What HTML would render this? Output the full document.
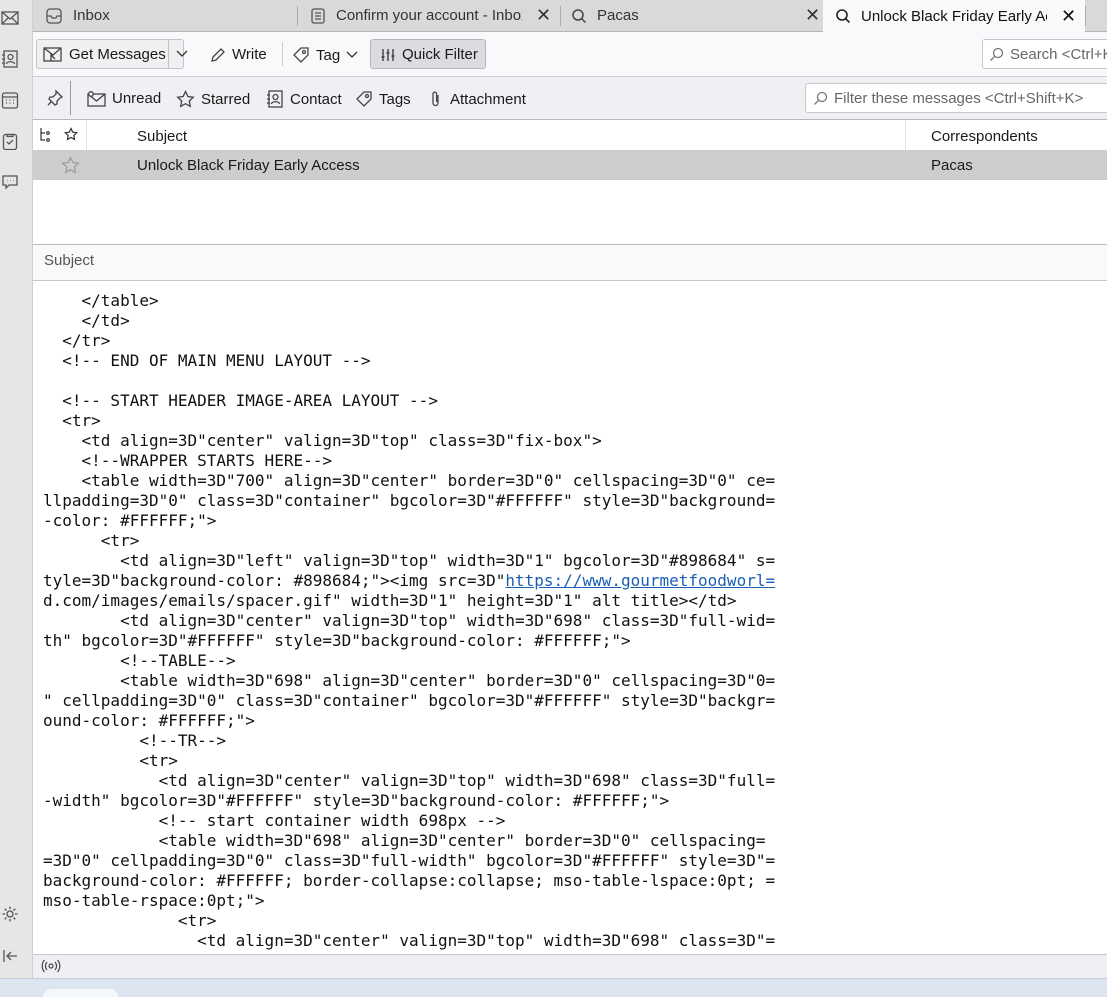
<!DOCTYPE html>
<html><head><meta charset="utf-8"><style>
*{margin:0;padding:0;box-sizing:border-box}
body{width:1107px;height:997px;overflow:hidden;background:#fff;font-family:"Liberation Sans",sans-serif;font-size:15px;color:#1a1a1a;position:relative}
.a{position:absolute}
.side{left:0;top:0;width:33px;height:978px;background:#e6e6e6;border-right:1px solid #cfcfcf}
.tabs{left:33px;top:0;width:1074px;height:32px;background:#d9d9d9;border-bottom:1px solid #b5b5b5}
.tab{top:0;height:31px;display:flex;align-items:center;font-size:15px;color:#333;white-space:nowrap}
.tb{left:33px;top:32px;width:1074px;height:45px;background:#f9f9fb;border-bottom:1px solid #cfcfd8}
.qf{left:33px;top:77px;width:1074px;height:43px;background:#f0f0f4;border-bottom:1px solid #b8b8b8}
.btn{display:flex;align-items:center;gap:6px;font-size:15px;color:#1a1a1a;white-space:nowrap}
.mono{font-family:"DejaVu Sans Mono","Liberation Mono",monospace;font-size:16px;line-height:20px;white-space:pre;color:#111}
svg{display:block;flex:none}
</style></head><body>
<div class="a side"></div>
<svg class="a" style="left:1px;top:9px" width="18" height="18" viewBox="0 0 18 18" fill="none" stroke="#555" stroke-width="1.3"><rect x="1" y="3" width="16" height="12"/><path d="M1 3l8 7 8-7M1 15l6-6M17 15l-6-6"/></svg>
<svg class="a" style="left:1px;top:50px" width="18" height="18" viewBox="0 0 18 18" fill="none" stroke="#555" stroke-width="1.3"><rect x="3" y="1" width="13" height="16"/><circle cx="9.5" cy="7" r="2.5"/><path d="M5.5 14c0-3 8-3 8 0M1 5h3M1 9h3M1 13h3"/></svg>
<svg class="a" style="left:1px;top:91px" width="18" height="18" viewBox="0 0 18 18" fill="none" stroke="#555" stroke-width="1.3"><rect x="1.5" y="2" width="15" height="15" rx="2"/><path d="M1.5 6h15M5 9h1M8.5 9h1M12 9h1M5 12h1M8.5 12h1M12 12h1"/></svg>
<svg class="a" style="left:1px;top:132px" width="18" height="18" viewBox="0 0 18 18" fill="none" stroke="#555" stroke-width="1.3"><rect x="2.5" y="2.5" width="13" height="15" rx="2"/><path d="M6 2.5h6v2H6zM6 10l2 2 4-4"/></svg>
<svg class="a" style="left:1px;top:173px" width="18" height="18" viewBox="0 0 18 18" fill="none" stroke="#555" stroke-width="1.3"><path d="M2 3h14v9H8l-3 3v-3H2z"/><path d="M6 7.5h.5M9 7.5h.5M12 7.5h.5"/></svg>
<svg class="a" style="left:1px;top:905px" width="18" height="18" viewBox="0 0 18 18" fill="none" stroke="#555" stroke-width="1.3"><circle cx="9" cy="9" r="3"/><path d="M9 1.5v2.5M9 14v2.5M1.5 9h2.5M14 9h2.5M3.7 3.7l1.8 1.8M12.5 12.5l1.8 1.8M3.7 14.3l1.8-1.8M12.5 5.5l1.8-1.8"/></svg>
<svg class="a" style="left:2px;top:948px" width="16" height="16" viewBox="0 0 16 16" fill="none" stroke="#555" stroke-width="1.3"><path d="M2 2v12M15 8H5M9 4L5 8l4 4"/></svg>

<div class="a tabs"></div>
<div class="a tab" style="left:33px;width:264px;padding-left:12px;gap:10px"><svg width="18" height="18" viewBox="0 0 18 18" fill="none" stroke="#555" stroke-width="1.3"><rect x="2" y="2" width="14" height="14" rx="3"/><path d="M2 9h4l1 2h4l1-2h4"/></svg><span>Inbox</span></div>
<div class="a" style="left:297px;top:6px;width:1px;height:20px;background:#aaa"></div>
<div class="a tab" style="left:298px;width:262px;padding-left:12px;gap:10px"><svg width="16" height="18" viewBox="0 0 16 18" fill="none" stroke="#555" stroke-width="1.3"><rect x="2" y="2" width="12" height="14" rx="2"/><path d="M5 6h6M5 9h6M5 12h6"/></svg><span style="overflow:hidden;width:186px">Confirm your account - Inbox</span><span style="font-size:18px;color:#333;margin-left:4px">✕</span></div>
<div class="a" style="left:560px;top:6px;width:1px;height:20px;background:#aaa"></div>
<div class="a tab" style="left:561px;width:262px;padding-left:10px;gap:10px"><svg width="16" height="16" viewBox="0 0 16 16" fill="none" stroke="#444" stroke-width="1.5"><circle cx="7" cy="7" r="5"/><path d="M10.5 10.5L14.5 14.5"/></svg><span style="width:198px">Pacas</span><span style="font-size:18px;color:#333">✕</span></div>
<div class="a tab" style="left:823px;width:262px;background:#f9f9fb;height:32px;padding-left:12px;gap:10px;color:#111"><svg width="16" height="16" viewBox="0 0 16 16" fill="none" stroke="#222" stroke-width="1.6"><circle cx="7" cy="7" r="5"/><path d="M10.5 10.5L14.5 14.5"/></svg><span style="overflow:hidden;width:186px">Unlock Black Friday Early Access</span><span style="font-size:18px;color:#111;margin-left:4px">✕</span></div>
<div class="a" style="left:1085px;top:6px;width:1px;height:20px;background:#aaa"></div>

<div class="a tb"></div>
<div class="a" style="left:36px;top:39px;width:148px;height:30px;border:1px solid #c4c4c8;border-radius:3px;background:#f0f0f3"></div>
<div class="a" style="left:168px;top:39px;width:1px;height:30px;background:#c4c4c8"></div>
<div class="a btn" style="left:43px;top:46px"><svg width="20" height="17" viewBox="0 0 20 17" fill="none" stroke="#444" stroke-width="1.3"><rect x="1" y="2" width="17" height="13"/><path d="M1 2l9 7 8-7M8 15V9l4 4"/></svg><span>Get Messages</span></div>
<svg class="a" style="left:176px;top:49px" width="12" height="10" viewBox="0 0 12 10" fill="none" stroke="#333" stroke-width="1.3"><path d="M1 2l5 5 5-5"/></svg>
<div class="a btn" style="left:210px;top:46px"><svg width="16" height="16" viewBox="0 0 16 16" fill="none" stroke="#444" stroke-width="1.3"><path d="M2 14l1-4L11 2l3 3-8 8z"/></svg><span>Write</span></div>
<div class="a" style="left:282px;top:42px;width:1px;height:24px;background:#ccc"></div>
<div class="a btn" style="left:292px;top:46px"><svg width="18" height="18" viewBox="0 0 18 18" fill="none" stroke="#444" stroke-width="1.3"><path d="M2 9l7-7h7v7l-7 7z"/><circle cx="12" cy="6" r="1.5"/></svg><span>Tag</span><svg width="12" height="10" viewBox="0 0 12 10" fill="none" stroke="#333" stroke-width="1.3"><path d="M1 2l5 5 5-5"/></svg></div>
<div class="a" style="left:370px;top:39px;width:116px;height:30px;border:1px solid #b5b5ba;border-radius:3px;background:#dcdce0"></div>
<div class="a btn" style="left:380px;top:46px"><svg width="16" height="16" viewBox="0 0 16 16" fill="none" stroke="#333" stroke-width="1.3"><path d="M3 2v12M8 2v12M13 2v12M1.5 10h3M6.5 6h3M11.5 9h3"/></svg><span>Quick Filter</span></div>
<div class="a" style="left:982px;top:39px;width:130px;height:30px;border:1px solid #c8c8cc;border-radius:3px;background:#fff"></div>
<div class="a btn" style="left:989px;top:46px;color:#666;width:118px;overflow:hidden"><svg width="15" height="15" viewBox="0 0 15 15" fill="none" stroke="#777" stroke-width="1.3"><circle cx="9" cy="6" r="4.5"/><path d="M5.8 9.2L1.5 13.5"/></svg><span>Search &lt;Ctrl+K&gt;</span></div>

<div class="a qf"></div>
<svg class="a" style="left:46px;top:89px" width="18" height="18" viewBox="0 0 18 18" fill="none" stroke="#444" stroke-width="1.3"><path d="M10 2l6 6-2 1-3 3 0 3-2 1-6-6 1-2 3 0 3-3zM6 12l-4 4"/></svg>
<div class="a" style="left:70px;top:81px;width:1px;height:34px;background:#999"></div>
<div class="a btn" style="left:87px;top:90px"><svg width="19" height="16" viewBox="0 0 19 16" fill="none" stroke="#444" stroke-width="1.3"><rect x="1" y="3" width="17" height="12"/><path d="M1 3l8.5 7L18 3"/><circle cx="4" cy="3" r="2.3" fill="#f0f0f4"/></svg><span>Unread</span></div>
<div class="a btn" style="left:176px;top:90px"><svg width="19" height="18" viewBox="0 0 19 18" fill="none" stroke="#444" stroke-width="1.3"><path d="M9.5 1.5l2.4 5 5.4.7-4 3.8 1 5.4-4.8-2.7-4.8 2.7 1-5.4-4-3.8 5.4-.7z"/></svg><span>Starred</span></div>
<div class="a btn" style="left:266px;top:90px"><svg width="18" height="18" viewBox="0 0 18 18" fill="none" stroke="#444" stroke-width="1.3"><rect x="3" y="1" width="13" height="16"/><circle cx="9.5" cy="7" r="2.5"/><path d="M5.5 14c0-3 8-3 8 0M1 5h3M1 9h3M1 13h3"/></svg><span>Contact</span></div>
<div class="a btn" style="left:355px;top:90px"><svg width="18" height="18" viewBox="0 0 18 18" fill="none" stroke="#444" stroke-width="1.3"><path d="M2 9l7-7h7v7l-7 7z"/><circle cx="12" cy="6" r="1.5"/></svg><span>Tags</span></div>
<div class="a btn" style="left:430px;top:90px"><svg width="12" height="18" viewBox="0 0 12 18" fill="none" stroke="#444" stroke-width="1.3"><path d="M8 5v8a2.5 2.5 0 01-5 0V4a1.8 1.8 0 013.6 0v8"/></svg><span style="margin-left:2px">Attachment</span></div>
<div class="a" style="left:805px;top:83px;width:310px;height:30px;border:1px solid #c8c8cc;border-radius:3px;background:#fff"></div>
<div class="a btn" style="left:813px;top:90px;color:#666"><svg width="15" height="15" viewBox="0 0 15 15" fill="none" stroke="#777" stroke-width="1.3"><circle cx="9" cy="6" r="4.5"/><path d="M5.8 9.2L1.5 13.5"/></svg><span>Filter these messages &lt;Ctrl+Shift+K&gt;</span></div>

<svg class="a" style="left:39px;top:127px" width="14" height="15" viewBox="0 0 14 15" fill="none" stroke="#333" stroke-width="1.2"><path d="M2 1v12h4M2 6h4"/><circle cx="9" cy="6" r="1.3"/><circle cx="9" cy="13" r="1.3"/></svg>
<svg class="a" style="left:64px;top:127px" width="14" height="14" viewBox="0 0 19 18" fill="none" stroke="#333" stroke-width="1.6"><path d="M9.5 1.5l2.4 5 5.4.7-4 3.8 1 5.4-4.8-2.7-4.8 2.7 1-5.4-4-3.8 5.4-.7z"/></svg>
<div class="a" style="left:86px;top:120px;width:1px;height:30px;background:#e0e0e0"></div>
<div class="a" style="left:137px;top:128px">Subject</div>
<div class="a" style="left:905px;top:120px;width:1px;height:30px;background:#e0e0e0"></div>
<div class="a" style="left:931px;top:128px">Correspondents</div>
<div class="a" style="left:33px;top:150px;width:1074px;height:30px;background:#cdcdcd"></div>
<svg class="a" style="left:61px;top:156px" width="19" height="18" viewBox="0 0 19 18" fill="none" stroke="#999" stroke-width="1.2"><path d="M9.5 1.5l2.4 5 5.4.7-4 3.8 1 5.4-4.8-2.7-4.8 2.7 1-5.4-4-3.8 5.4-.7z"/></svg>
<div class="a" style="left:137px;top:157px">Unlock Black Friday Early Access</div>
<div class="a" style="left:931px;top:157px">Pacas</div>

<div class="a" style="left:33px;top:244px;width:1074px;height:37px;background:#f9f9fb;border-top:1px solid #b8b8b8;border-bottom:1px solid #c8c8c8"></div>
<div class="a" style="left:44px;top:252px;color:#555">Subject</div>

<div class="a mono" style="left:43px;top:291px">    &lt;/table&gt;
    &lt;/td&gt;
  &lt;/tr&gt;
  &lt;!-- END OF MAIN MENU LAYOUT --&gt;

  &lt;!-- START HEADER IMAGE-AREA LAYOUT --&gt;
  &lt;tr&gt;
    &lt;td align=3D"center" valign=3D"top" class=3D"fix-box"&gt;
    &lt;!--WRAPPER STARTS HERE--&gt;
    &lt;table width=3D"700" align=3D"center" border=3D"0" cellspacing=3D"0" ce=
llpadding=3D"0" class=3D"container" bgcolor=3D"#FFFFFF" style=3D"background=
-color: #FFFFFF;"&gt;
      &lt;tr&gt;
        &lt;td align=3D"left" valign=3D"top" width=3D"1" bgcolor=3D"#898684" s=
tyle=3D"background-color: #898684;"&gt;&lt;img src=3D"<span style="color:#1a5fb4;text-decoration:underline">https://www.gourmetfoodworl=</span>
d.com/images/emails/spacer.gif" width=3D"1" height=3D"1" alt title&gt;&lt;/td&gt;
        &lt;td align=3D"center" valign=3D"top" width=3D"698" class=3D"full-wid=
th" bgcolor=3D"#FFFFFF" style=3D"background-color: #FFFFFF;"&gt;
        &lt;!--TABLE--&gt;
        &lt;table width=3D"698" align=3D"center" border=3D"0" cellspacing=3D"0=
" cellpadding=3D"0" class=3D"container" bgcolor=3D"#FFFFFF" style=3D"backgr=
ound-color: #FFFFFF;"&gt;
          &lt;!--TR--&gt;
          &lt;tr&gt;
            &lt;td align=3D"center" valign=3D"top" width=3D"698" class=3D"full=
-width" bgcolor=3D"#FFFFFF" style=3D"background-color: #FFFFFF;"&gt;
            &lt;!-- start container width 698px --&gt;
            &lt;table width=3D"698" align=3D"center" border=3D"0" cellspacing=
=3D"0" cellpadding=3D"0" class=3D"full-width" bgcolor=3D"#FFFFFF" style=3D"=
background-color: #FFFFFF; border-collapse:collapse; mso-table-lspace:0pt; =
mso-table-rspace:0pt;"&gt;
              &lt;tr&gt;
                &lt;td align=3D"center" valign=3D"top" width=3D"698" class=3D"=</div>

<div class="a" style="left:33px;top:954px;width:1074px;height:24px;background:#f0f0f4;border-top:1px solid #c8c8c8"></div>
<svg class="a" style="left:41px;top:958px" width="20" height="16" viewBox="0 0 20 16" fill="none" stroke="#444" stroke-width="1.2"><circle cx="10" cy="8" r="2"/><path d="M6 4a6 6 0 000 8M14 4a6 6 0 010 8M3.5 2a9 9 0 000 12M16.5 2a9 9 0 010 12"/></svg>
<div class="a" style="left:0;top:978px;width:1107px;height:19px;background:#dde6f0;border-top:1px solid #c5cdd6"></div>
<div class="a" style="left:43px;top:989px;width:75px;height:8px;background:#f5f8fb;border-radius:8px 8px 0 0"></div>
</body></html>
